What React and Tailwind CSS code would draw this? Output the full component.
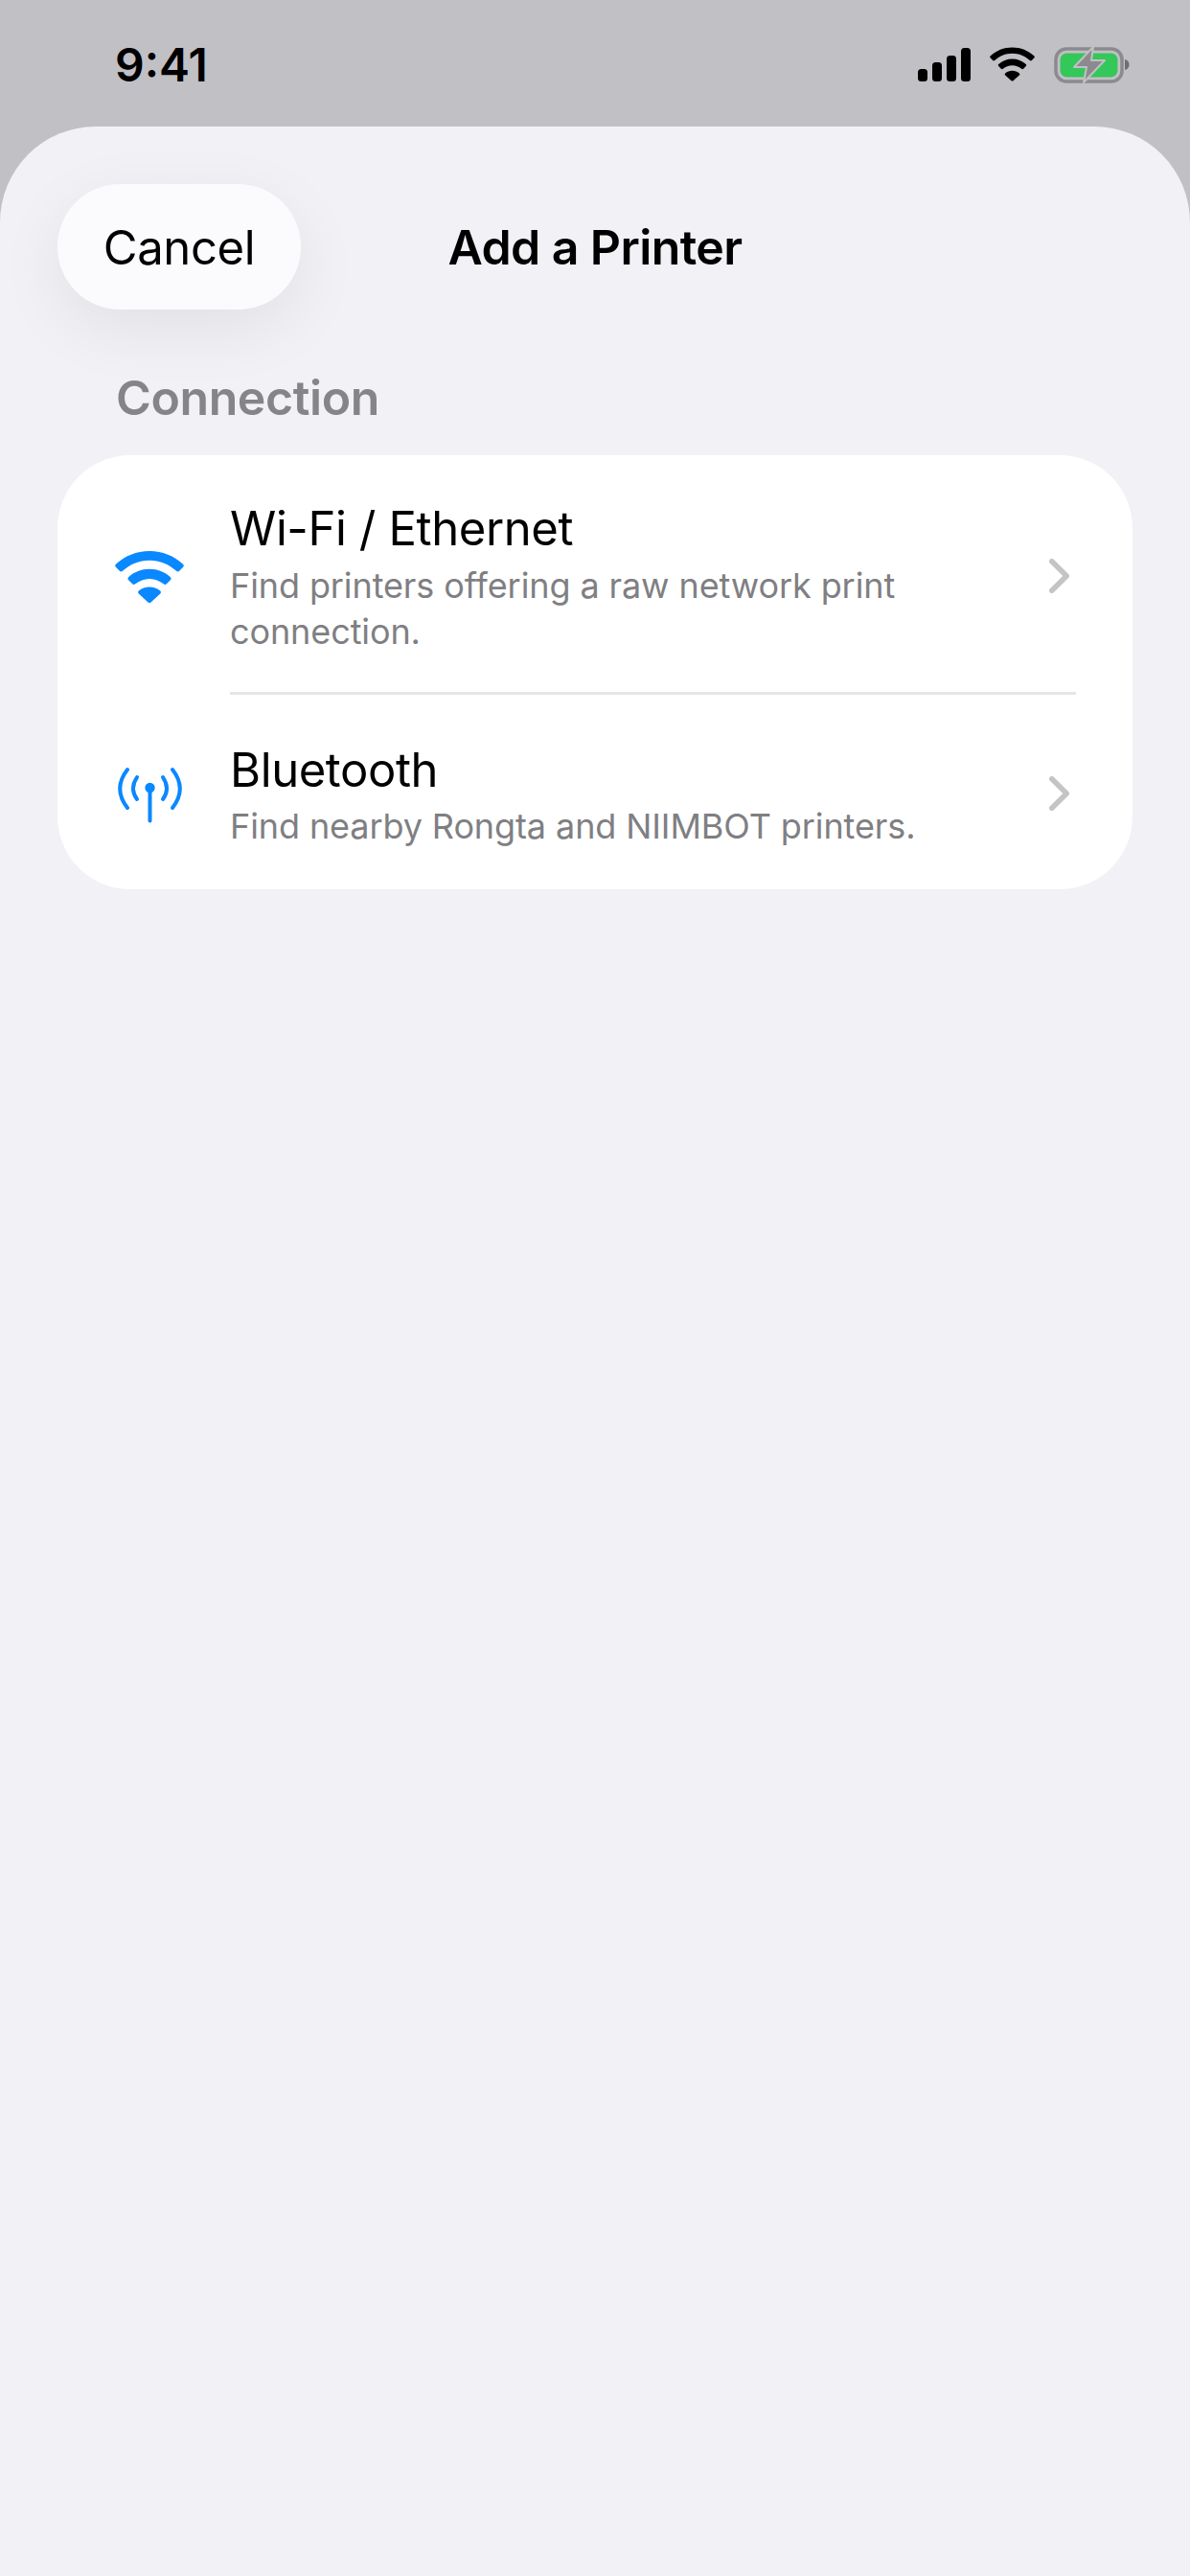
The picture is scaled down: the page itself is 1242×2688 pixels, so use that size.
const font = { fontFamily: 'Inter, "Noto Sans", sans-serif' }

function Signal() {
  return (
    <svg width="55" height="35" viewBox="0 0 55 35" className="block">
      <rect x="0" y="22" width="10" height="13" rx="3.5" fill="#000" />
      <rect x="15" y="15" width="10" height="20" rx="3.5" fill="#000" />
      <rect x="30" y="8" width="10" height="27" rx="3.5" fill="#000" />
      <rect x="45" y="0" width="10" height="35" rx="3.5" fill="#000" />
    </svg>
  )
}

function WifiGlyph({ color, width, height }) {
  return (
    <svg width={width} height={height} viewBox="0 0 48 36" className="block">
      <path d="M24 0C15 0 6.800 3.400 .6 9.200c-.6.600-.6 1.400 0 2l2.600 2.700c.6.600 1.500.6 2.100 0C10.200 9.300 16.800 6.500 24 6.500s13.800 2.800 18.700 7.400c.6.600 1.500.6 2.100 0l2.600-2.700c.6-.6.600-1.400 0-2C41.200 3.400 33 0 24 0z" fill={color} />
      <path d="M24 12.500c-5.600 0-10.700 2.100-14.600 5.600-.6.600-.6 1.400 0 2l2.700 2.700c.6.600 1.400.6 2.100.1 2.700-2.200 6.100-3.600 9.800-3.600s7.100 1.400 9.800 3.600c.7.500 1.500.5 2.100-.1l2.700-2.700c.6-.6.600-1.400 0-2-3.900-3.500-9-5.600-14.600-5.600z" fill={color} />
      <path d="M24 25c-2.800 0-5.400 1-7.500 2.700-.6.500-.6 1.400 0 2l6.500 5.900c.6.500 1.400.5 2 0l6.500-5.900c.6-.6.600-1.500 0-2C29.400 26 26.800 25 24 25z" fill={color} />
    </svg>
  )
}

function Battery() {
  return (
    <svg width="80" height="40" viewBox="0 0 80 40" className="block">
      <rect x="2" y="3" width="69" height="34" rx="11" fill="none" stroke="#8b8a8e" strokeWidth="3.500" />
      <rect x="6.500" y="7.500" width="60" height="25" rx="7" fill="#34c759" />
      <path d="M74 14c3 .8 4.500 2.800 4.500 5.500s-1.500 4.700-4.500 5.500z" fill="#6f6e72" />
      <path d="M41 1L21 22H34L31 38L53 15H39z" fill="#8b8a8e" stroke="#c1c0c5" strokeWidth="2" strokeLinejoin="round" />
    </svg>
  )
}

function Antenna() {
  return (
    <svg width="67" height="59" viewBox="0 0 67 59" fill="none" stroke="#0a88ff" strokeWidth="4" strokeLinecap="round" className="block">
      <path d="M10 3Q-5.600 23 10 43" />
      <path d="M57 3Q72.600 23 57 43" />
      <path d="M20 11Q12 23 20 34" />
      <path d="M47 11Q55 23 47 34" />
      <path d="M33.500 22V56.500" />
      <circle cx="33.500" cy="22" r="5.200" fill="#0a88ff" stroke="none" />
    </svg>
  )
}

function Chevron() {
  return (
    <svg width="21" height="36" viewBox="0 0 21 36" fill="none" stroke="#c4c4c6" strokeWidth="5.500" strokeLinecap="round" strokeLinejoin="round" className="block">
      <path d="M2.800 2.800L18.200 18L2.800 33.200" />
    </svg>
  )
}

function Row({ icon, title, desc, gap, className }) {
  return (
    <div className={`flex ${className}`}>
      <div className="w-[180px] shrink-0 pl-[59px] flex items-center">{icon}</div>
      <div className="flex-1 min-w-0">
        <div className={`pt-[2px] text-[49px] leading-[60px] tracking-[-0.4px] text-black ${gap}`}>{title}</div>
        <div className="w-[780px] text-[36px] leading-[48px] tracking-[-0.1px] text-[#7f7f83]">{desc}</div>
      </div>
      <div className="w-[59px] shrink-0 pr-[7px] pb-[2px] flex items-center justify-end"><Chevron /></div>
    </div>
  )
}

export default function App() {
  return (
    <div className="h-[2688px] w-[1242px] bg-[#c1c0c5] flex flex-col overflow-hidden" style={font}>
      <div className="h-[132px] shrink-0 flex justify-between pl-[120px] pr-[62px] pt-[39px]">
        <div className="text-[48px] leading-[58px] font-semibold text-black">9:41</div>
        <div className="flex items-start gap-[20px] pt-[9px]">
          <div className="pt-[2px]"><Signal /></div>
          <div className="pt-[1px]"><WifiGlyph color="#000" width="47" height="36" /></div>
          <Battery />
        </div>
      </div>
      <div className="flex-1 bg-[#f1f1f6] rounded-t-[100px] pt-[60px] px-[60px]">
        <div className="relative h-[131px] flex items-center">
          <div className="h-[131px] w-[254px] pt-[2px] rounded-[65px] bg-[#fbfbfe] shadow-[0_20px_70px_rgba(0,0,0,0.07)] flex items-center justify-center text-[49px] tracking-[-0.4px] text-black">
            Cancel
          </div>
          <div className="absolute inset-0 pt-[2px] flex items-center justify-center text-[50px] font-semibold tracking-[-0.6px] text-black">
            Add a Printer
          </div>
        </div>
        <div className="mt-[63px] pl-[61px] text-[50px] leading-[58px] font-semibold tracking-[-0.4px] text-[#858589]">Connection</div>
        <div className="mt-[31px] bg-white rounded-[76px] pr-[59px]">
          <Row icon={<WifiGlyph color="#0a88ff" width="74" height="54" />} title="Wi-Fi / Ethernet" desc="Find printers offering a raw network print connection." gap="mb-[5px]" className="pt-[45px] pb-[39px]" />
          <div className="ml-[180px] h-[3px] bg-[#e6e6e8]" />
          <Row icon={<div className="pl-[4px]"><Antenna /></div>} title="Bluetooth" desc="Find nearby Rongta and NIIMBOT printers." gap="mb-[4px]" className="pt-[47px] pb-[42px]" />
        </div>
      </div>
    </div>
  )
}
